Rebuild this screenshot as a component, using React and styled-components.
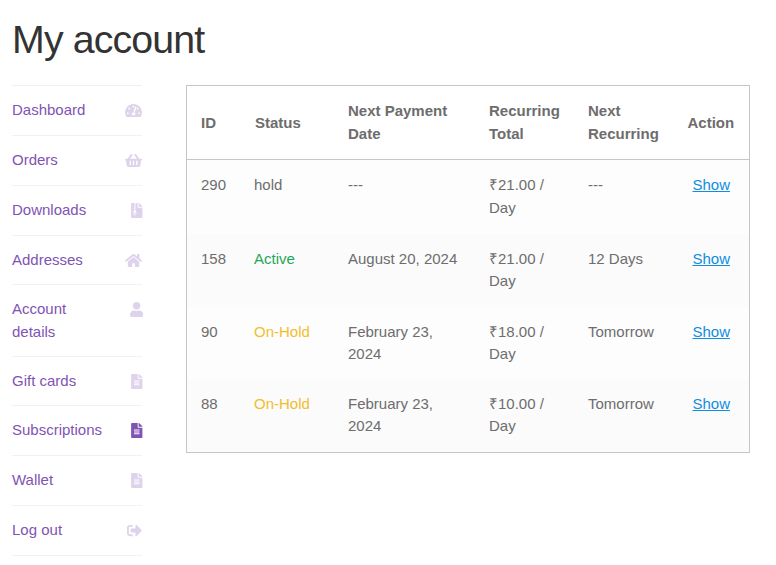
import React from "react";
import styled, { createGlobalStyle } from "styled-components";
import {
  FaTachometerAlt,
  FaShoppingBasket,
  FaFileArchive,
  FaHome,
  FaUser,
  FaFileAlt,
  FaSignOutAlt,
} from "react-icons/fa";

const GlobalStyle = createGlobalStyle`
  * { box-sizing: border-box; }
  body {
    margin: 0;
    background: #fff;
    color: #6d6d6d;
    font-family: "Liberation Sans", Arial, sans-serif;
    font-size: 15px;
    line-height: 23px;
  }
`;

const Page = styled.main`
  width: 776px;
  height: 565px;
  padding: 16px 26px 0 12px;
  overflow: hidden;
`;

const Title = styled.h1`
  margin: 0 0 22px;
  color: #333;
  font-size: 39.3px;
  font-weight: 300;
  line-height: 47px;
  letter-spacing: -0.85px;
`;

const Columns = styled.div`
  display: grid;
  grid-template-columns: 130px 564px;
  column-gap: 44px;
  align-items: start;
`;

const Menu = styled.ul`
  margin: 0;
  padding: 0;
  list-style: none;
  border-top: 1px solid #f0f0f0;
`;

const MenuItem = styled.li`
  height: ${(p) => p.$height}px;
  border-bottom: 1px solid #f2f2f2;
`;

const MenuLink = styled.a`
  display: flex;
  justify-content: space-between;
  padding-top: 12px;
  color: #7f54b3;
  text-decoration: none;

  svg {
    flex: none;
    width: ${(p) => p.$iconWidth}px;
    height: 15px;
    margin: 5px ${(p) => (p.$iconWidth < 15 ? -0.75 : 0)}px 0 0;
    opacity: ${(p) => (p.$active ? 1 : 0.25)};
  }
`;

const MenuLabel = styled.span`
  max-width: 92px;
`;

const Table = styled.table`
  width: 564px;
  table-layout: fixed;
  border: 1px solid #c6c6c6;
  border-collapse: separate;
  border-spacing: 0;
`;

const Col = styled.col`
  width: ${(p) => p.$width}px;
`;

const HeadRow = styled.tr`
  height: 74px;
`;

const HeadCell = styled.th`
  padding: 0 0 ${(p) => (p.$tall ? 1 : 0)}px ${(p) => p.$left || 14}px;
  border-bottom: 1px solid #c6c6c6;
  font-weight: 700;
  text-align: left;
  vertical-align: middle;
`;

const Row = styled.tr`
  height: ${(p) => p.$height}px;
  background: ${(p) => p.$background};
  line-height: ${(p) => p.$line}px;
`;

const Cell = styled.td`
  padding: ${(p) => p.$top}px ${(p) => (p.$center ? 14 : 10)}px 0 14px;
  color: ${(p) => p.$color || "inherit"};
  text-align: ${(p) => (p.$center ? "center" : "left")};
  vertical-align: top;
`;

const ShowLink = styled.a`
  color: #0f8ee0;
  text-decoration: underline;
`;

const menu = [
  { label: "Dashboard", icon: FaTachometerAlt, iconWidth: 17, height: 50 },
  { label: "Orders", icon: FaShoppingBasket, iconWidth: 17, height: 50 },
  { label: "Downloads", icon: FaFileArchive, iconWidth: 11.5, height: 50 },
  { label: "Addresses", icon: FaHome, iconWidth: 17, height: 49 },
  { label: "Account details", icon: FaUser, iconWidth: 13.2, height: 72 },
  { label: "Gift cards", icon: FaFileAlt, iconWidth: 11.5, height: 49 },
  { label: "Subscriptions", icon: FaFileAlt, iconWidth: 11.5, height: 50, active: true },
  { label: "Wallet", icon: FaFileAlt, iconWidth: 11.5, height: 50 },
  { label: "Log out", icon: FaSignOutAlt, iconWidth: 15, height: 50 },
];

const statusColors = { Active: "#1fa75a", "On-Hold": "#f2bd2c" };

const columns = [
  { title: "ID", width: 53 },
  { title: "Status", width: 94, left: 15 },
  { title: "Next Payment Date", width: 141, tall: true },
  { title: "Recurring Total", width: 99, tall: true },
  { title: "Next Recurring", width: 99.5, tall: true },
  { title: "Action", width: 75.5 },
];

const rows = [
  { id: 290, status: "hold", date: "---", total: "₹21.00 / Day", next: "---", height: 74, line: 23, top: 13, background: "#fdfdfd" },
  { id: 158, status: "Active", date: "August 20, 2024", total: "₹21.00 / Day", next: "12 Days", height: 73, line: 22, top: 14, background: "#fbfbfb" },
  { id: 90, status: "On-Hold", date: "February 23, 2024", total: "₹18.00 / Day", next: "Tomorrow", height: 73, line: 22, top: 14, background: "#fdfdfd" },
  { id: 88, status: "On-Hold", date: "February 23, 2024", total: "₹10.00 / Day", next: "Tomorrow", height: 72, line: 22, top: 13, background: "#fbfbfb" },
];

export default function App() {
  return (
    <>
      <GlobalStyle />
      <Page>
        <Title>My account</Title>
        <Columns>
          <Menu>
            {menu.map(({ label, icon: Icon, iconWidth, height, active }) => (
              <MenuItem key={label} $height={height}>
                <MenuLink href="#" $iconWidth={iconWidth} $active={active}>
                  <MenuLabel>{label}</MenuLabel>
                  <Icon />
                </MenuLink>
              </MenuItem>
            ))}
          </Menu>
          <Table>
            <colgroup>
              {columns.map((c) => (
                <Col key={c.title} $width={c.width} />
              ))}
            </colgroup>
            <thead>
              <HeadRow>
                {columns.map((c) => (
                  <HeadCell key={c.title} $left={c.left} $tall={c.tall}>{c.title}</HeadCell>
                ))}
              </HeadRow>
            </thead>
            <tbody>
              {rows.map((r) => (
                <Row key={r.id} $height={r.height} $line={r.line} $background={r.background}>
                  <Cell $top={r.top}>{r.id}</Cell>
                  <Cell $top={r.top} $color={statusColors[r.status]}>{r.status}</Cell>
                  <Cell $top={r.top}>{r.date}</Cell>
                  <Cell $top={r.top}>{r.total}</Cell>
                  <Cell $top={r.top}>{r.next}</Cell>
                  <Cell $top={r.top} $center>
                    <ShowLink href="#">Show</ShowLink>
                  </Cell>
                </Row>
              ))}
            </tbody>
          </Table>
        </Columns>
      </Page>
    </>
  );
}
